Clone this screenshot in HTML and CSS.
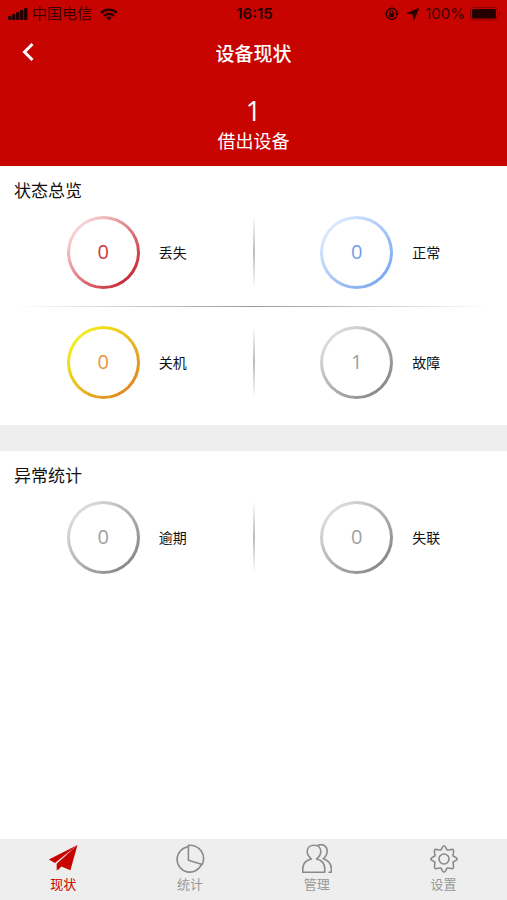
FILE: index.html
```
<!DOCTYPE html>
<html lang="zh-CN">

<head>
    <meta charset="UTF-8">
    <meta name="viewport" content="width=device-width, initial-scale=1.0">
    <title>设备现状</title>
    <link rel="stylesheet" href="styles.css">
</head>

<body>
    <header class="header">
        <div class="status-bar">
            <div class="status-left">
                <svg width="20" height="12" viewBox="0 0 20 12">
                    <rect x="0" y="8" width="3.500" height="4" rx="1" />
                    <rect x="4" y="6" width="3.500" height="6" rx="1" />
                    <rect x="8" y="4" width="3.500" height="8" rx="1" />
                    <rect x="12" y="2" width="3.500" height="10" rx="1" />
                    <rect x="16" y="0" width="3.500" height="12" rx="1" />
                </svg>
                <span class="carrier">中国电信</span>
                <svg width="18" height="13" viewBox="0 0 18 13">
                    <path d="M1.2 4.8a11.2 11.2 0 0 1 15.6 0M4 7.9a7.2 7.2 0 0 1 10 0" fill="none" stroke="currentColor" stroke-width="2.3" />
                    <path d="M9 12.6 6.2 9.8a4 4 0 0 1 5.6 0z" />
                </svg>
            </div>
            <span class="time">16:15</span>
            <div class="status-right">
                <svg width="14" height="14" viewBox="0 0 14 14">
                    <path d="M11.6 9.6a5.5 5.5 0 1 1 .7-3.4" fill="none" stroke="currentColor" stroke-width="1.4" />
                    <path d="M9.800 6.2h4.200l-2 3z" />
                    <rect x="3.800" y="6" width="5.200" height="4" rx=".5" />
                    <path d="M5 6.2V5a1.5 1.5 0 0 1 3 0v1.2" fill="none" stroke="currentColor" />
                </svg>
                <svg class="locate" width="12" height="12" viewBox="0 0 12 12">
                    <path d="M11.8.2 7 11.8 6 6.200.2 5.2z" stroke="currentColor" stroke-width=".6" />
                </svg>
                <span>100%</span>
                <svg width="31" height="14" viewBox="0 0 31 14">
                    <rect x=".5" y=".5" width="27" height="12.5" rx="3" fill="none" stroke="currentColor" opacity=".4" />
                    <rect x="2" y="2" width="24" height="9.5" rx="1.5" />
                    <path d="M29 4.5c2 .6 2 4 0 4.6z" opacity=".5" />
                </svg>
            </div>
        </div>
        <nav class="nav">
            <button class="back" aria-label="返回">
                <svg width="14" height="20" viewBox="0 0 14 20">
                    <path d="M11.5 2 3.500 10l8 8" fill="none" stroke="currentColor" stroke-width="3" />
                </svg>
            </button>
            <h1>设备现状</h1>
        </nav>
        <div class="lent">
            <div class="lent-count">1</div>
            <div class="lent-label">借出设备</div>
        </div>
    </header>

    <main>
        <section class="panel">
            <h2>状态总览</h2>
            <div class="row row-line">
                <div class="cell"><span class="ring red">0</span><span class="label">丢失</span></div>
                <div class="cell"><span class="ring blue">0</span><span class="label">正常</span></div>
            </div>
            <div class="row">
                <div class="cell"><span class="ring yellow">0</span><span class="label">关机</span></div>
                <div class="cell"><span class="ring gray">1</span><span class="label">故障</span></div>
            </div>
        </section>
        <section class="panel">
            <h2>异常统计</h2>
            <div class="row">
                <div class="cell"><span class="ring gray">0</span><span class="label">逾期</span></div>
                <div class="cell"><span class="ring gray">0</span><span class="label">失联</span></div>
            </div>
        </section>
    </main>

    <footer class="tabs">
        <a class="tab active" href="#">
            <svg width="30" height="30" viewBox="0 0 30 30">
                <path d="M29.500 1 .8 15.500l6.200 3.500z" />
                <path d="M29.500 1 9.200 20.200l.6 6 3.600-3.700 9 3.700z" />
                <path d="M29.500 1 8.700 19.800v6.700l2.600-2.700z" />
            </svg>
            <span>现状</span>
        </a>
        <a class="tab" href="#">
            <svg class="line" width="30" height="30" viewBox="0 0 30 30">
                <path d="M13.4 2.8a12.7 12.7 0 1 0 13.3 17" />
                <path d="M13.4 1.2v15l13.900 4.300C31.500 10 24.500.8 13.400 1.200z" />
            </svg>
            <span>统计</span>
        </a>
        <a class="tab" href="#">
            <svg class="line" width="30" height="30" viewBox="0 0 30 30">
                <path d="M9.500 15C7 13 5.200 10 5.200 7.200 5.200 3.500 8 1.200 12 1.200s6.800 2.300 6.800 6c0 2.800-1.800 5.800-4.300 7.800 5 1 8 4.300 8.300 9.500v3.700H.8v-3.700C1 19.300 4.500 16 9.500 15z" />
                <path d="M15.500 1.200C21 -.5 25.200 2 25.200 7c0 3-1.400 5.600-3.900 7.800 4.600 1.600 7.800 4.700 8.100 9.700v3.700h-3" />
            </svg>
            <span>管理</span>
        </a>
        <a class="tab" href="#">
            <svg class="line" width="30" height="30" viewBox="0 0 30 30">
                <circle cx="15" cy="15" r="5" />
                <path d="M15 1.8C16.7 1.8 17 4.9 18.1 5.9 19.6 6.5 23.1 4.5 24.3 5.7 25.5 6.9 23.5 10.4 24.1 11.9 25.1 13 28.2 13.3 28.2 15S25.1 17 24.1 18.1C23.5 19.6 25.5 23.1 24.3 24.3 23.1 25.5 19.6 23.5 18.1 24.1 17 25.1 16.7 28.2 15 28.2S13 25.1 11.9 24.1C10.4 23.5 6.9 25.5 5.7 24.3 4.5 23.1 6.5 19.6 5.9 18.1 4.9 17 1.8 16.7 1.8 15S4.9 13 5.9 11.9C6.5 10.4 4.5 6.9 5.7 5.7 6.9 4.5 10.4 6.5 11.9 5.9 13 4.9 13.3 1.8 15 1.8z" />
            </svg>
            <span>设置</span>
        </a>
    </footer>
</body>

</html>
```

FILE: styles.css
```
* {
    box-sizing: border-box;
}

body {
    display: flex;
    flex-direction: column;
    min-height: 100vh;
    margin: 0;
    background: #fff;
    color: #111;
    font-family: "Liberation Sans", "Noto Sans CJK SC", sans-serif;
}

h1,
h2 {
    margin: 0;
    font-weight: 400;
}

svg {
    display: block;
    fill: currentColor;
}

.header {
    background: #c80400;
    color: #fff;
    padding-bottom: 8px;
}

.status-bar {
    display: grid;
    grid-template-columns: 1fr auto 1fr;
    align-items: center;
    height: 28px;
    padding: 0 6px 0 8px;
    color: #3c0000;
    font: 15px/28px Inter, "Noto Sans CJK SC", sans-serif;
}

.status-left,
.status-right {
    display: flex;
    align-items: center;
}

.status-left svg,
.status-right svg,
.time {
    color: #250000;
}

.carrier {
    margin: 0 8px 0 4px;
}

.time {
    font-weight: 600;
}

.status-right {
    justify-content: flex-end;
    gap: 5px;
}

.status-right .locate {
    margin: 0 1px 0 3px;
}

.nav {
    display: grid;
    grid-template-columns: 56px 1fr 56px;
    align-items: center;
    height: 48px;
}

.back {
    display: flex;
    justify-content: center;
    padding: 0;
    border: 0;
    background: none;
    color: #fff;
}

.nav h1 {
    text-align: center;
    font-size: 19px;
    font-weight: 500;
}

.lent {
    padding-top: 20px;
    text-align: center;
}

.lent-count {
    font: 27px/30px "Open Sans", sans-serif;
}

.lent-label {
    font-size: 18px;
    line-height: 32px;
}

.panel {
    padding: 18px 0 8px;
}

.panel + .panel {
    border-top: 26px solid #eee;
}

.panel h2 {
    margin-bottom: -3px;
    padding-left: 14px;
    font-size: 17px;
    line-height: 16px;
}

.row {
    display: grid;
    grid-template-columns: 1fr 1fr;
    height: 110px;
    background: linear-gradient(transparent, #bbb 50%, transparent) center / 2px 72px no-repeat;
}

.row-line {
    background:
        linear-gradient(transparent, #bbb 50%, transparent) center / 2px 72px no-repeat,
        linear-gradient(90deg, transparent 3%, #999 50%, transparent 97%) bottom / 100% 1px no-repeat;
}

.cell {
    display: flex;
    align-items: center;
    justify-content: center;
    gap: 19px;
}

.ring {
    width: 73px;
    height: 73px;
    border: 3px solid transparent;
    border-radius: 50%;
    font: 20px/66px "Open Sans", sans-serif;
    text-align: center;
}

.red {
    background: linear-gradient(#fff, #fff) padding-box, linear-gradient(135deg, #f8d4d6 15%, #c82c38 85%) border-box;
    color: #cc3a40;
}

.blue {
    background: linear-gradient(#fff, #fff) padding-box, linear-gradient(135deg, #d8e8fe 15%, #7caaf2 85%) border-box;
    color: #719ee6;
}

.yellow {
    background: linear-gradient(#fff, #fff) padding-box, linear-gradient(135deg, #f2ee20 15%, #e08a20 85%) border-box;
    color: #e8943c;
}

.gray {
    background: linear-gradient(#fff, #fff) padding-box, linear-gradient(135deg, #dcdcdc 15%, #8a8a8a 85%) border-box;
    color: #a0a0a0;
}

.label {
    font-size: 14px;
}

.tabs {
    display: grid;
    grid-template-columns: repeat(4, 1fr);
    height: 61px;
    margin-top: auto;
    background: #eee;
}

.tab {
    display: flex;
    flex-direction: column;
    align-items: center;
    padding-top: 5px;
    color: #999;
    font-size: 13px;
    line-height: 21px;
    text-decoration: none;
}

.tab.active {
    color: #c80400;
}

.line {
    fill: none;
    stroke: #8a8a8a;
    stroke-width: 1.6;
    stroke-linejoin: round;
}
```
